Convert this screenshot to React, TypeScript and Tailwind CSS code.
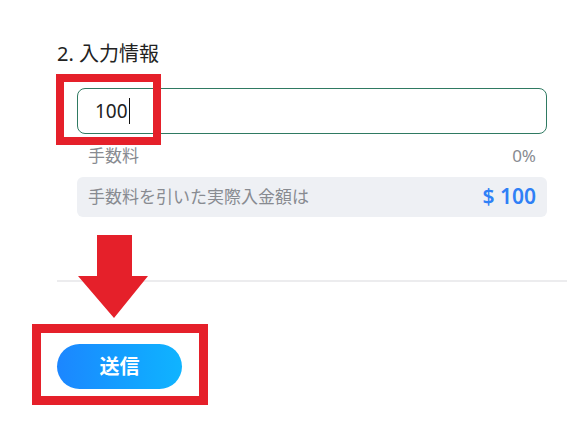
export default function App() {
  return (
    <div
      className="relative w-[584px] h-[445px] bg-white overflow-hidden"
      style={{ fontFamily: '"Noto Sans", "Noto Sans CJK JP", sans-serif' }}
    >
      <div className="pt-[40px] pl-[57px] pr-[17px]">
        <h2 className="text-[20px] leading-[28px] text-[#222]">2. 入力情報</h2>

        <div className="ml-[20px] w-[470px]">
          <div className="mt-[20px] h-[46px] border border-[#2f7a62] rounded-[8px] pl-[17px] flex items-center">
            <span className="text-[19px] text-[#222]">100</span>
            <span className="ml-[1px] w-[1px] h-[26px] bg-[#111]"></span>
          </div>

          <div className="mt-[10px] px-[11px] flex justify-between text-[17px] leading-[24px] text-[#888b91]">
            <span>手数料</span>
            <span>0%</span>
          </div>

          <div className="mt-[9px] h-[40px] rounded-[6px] bg-[#eef0f4] px-[11px] flex items-center justify-between">
            <span className="text-[17px] text-[#888b91]">手数料を引いた実際入金額は</span>
            <span className="text-[21px] font-semibold text-[#2f80f6]">$ 100</span>
          </div>
        </div>

        <div className="mt-[63px] h-[2px] w-[510px] bg-[#ececee]"></div>

        <button className="mt-[62px] w-[125px] h-[45px] rounded-full bg-gradient-to-r from-[#1c86ff] to-[#10b4ff] text-white text-[20px] font-bold">
          送信
        </button>
      </div>

      {/* annotation overlays */}
      <div className="absolute left-[56px] top-[74px] w-[105px] h-[71px] border-[8px] border-[#e5202a]"></div>
      <div className="absolute left-[32px] top-[324px] w-[176px] h-[81px] border-[9px] border-[#e5202a]"></div>
      <svg className="absolute left-[78px] top-[235px]" width="70" height="84" viewBox="0 0 70 84">
        <polygon points="19,0 54,0 54,41 70,41 36,83 0,41 19,41" fill="#e5202a" />
      </svg>
    </div>
  )
}
